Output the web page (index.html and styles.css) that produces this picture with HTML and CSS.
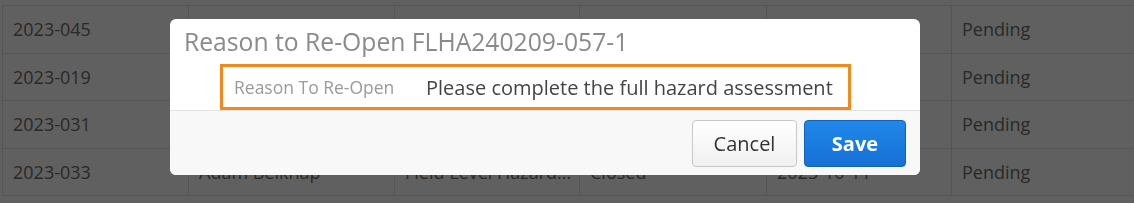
FILE: index.html
```html
<!DOCTYPE html>
<html lang="en">
<head>
  <meta charset="UTF-8">
  <title>FLHA Reviews</title>
  <link rel="stylesheet" href="styles.css">
</head>
<body>

  <div class="grid">
    <div class="row">
      <div class="cell">2023-045</div>
      <div class="cell"></div>
      <div class="cell"></div>
      <div class="cell"></div>
      <div class="cell"></div>
      <div class="cell">Pending</div>
    </div>
    <div class="row">
      <div class="cell">2023-019</div>
      <div class="cell"></div>
      <div class="cell"></div>
      <div class="cell"></div>
      <div class="cell"></div>
      <div class="cell">Pending</div>
    </div>
    <div class="row">
      <div class="cell">2023-031</div>
      <div class="cell"></div>
      <div class="cell"></div>
      <div class="cell"></div>
      <div class="cell"></div>
      <div class="cell">Pending</div>
    </div>
    <div class="row">
      <div class="cell">2023-033</div>
      <div class="cell">Adam Belknap</div>
      <div class="cell">Field Level Hazard...</div>
      <div class="cell">Closed</div>
      <div class="cell">2023-10-11</div>
      <div class="cell">Pending</div>
    </div>
  </div>

  <!-- modal backdrop -->
  <div class="overlay"></div>

  <div class="modal">
    <div class="modal-header">
      <div class="modal-title">Reason to Re-Open FLHA240209-057-1</div>
      <div class="field">
        <span class="field-label">Reason To Re-Open</span>
        <span class="field-value">Please complete the full hazard assessment</span>
      </div>
    </div>
    <div class="modal-footer">
      <button class="btn btn-cancel">Cancel</button>
      <button class="btn btn-save">Save</button>
    </div>
  </div>

</body>
</html>
```

FILE: styles.css
```css
body {
  margin: 0;
  padding: 0;
  font-family: "Open Sans", "Liberation Sans", sans-serif;
  background: #fff;
  overflow: hidden;
}

.grid {
  margin: 5px 0 0 2px;
  border-top: 1px solid #e2e2e2;
  border-left: 1px solid #e2e2e2;
}

.row {
  display: grid;
  grid-template-columns: 186px 206px 185px 187px 185px 200px;
  height: 46.5px;
  border-bottom: 1px solid #e2e2e2;
}

.cell {
  padding: 0 10px;
  border-right: 1px solid #e2e2e2;
  display: flex;
  align-items: center;
  font-size: 18px;
  color: #6e6e6e;
  white-space: nowrap;
  overflow: hidden;
}

.overlay {
  position: fixed;
  inset: 0;
  background: rgba(0, 0, 0, 0.625);
}

.modal {
  position: absolute;
  left: 170px;
  top: 19px;
  width: 750px;
  background: #fff;
  border-radius: 6px;
  overflow: hidden;
}

.modal-header {
  padding-top: 6px;
}

.modal-title {
  padding-left: 14px;
  font-size: 24.7px;
  line-height: 33px;
  color: #8a8a8a;
}

.field {
  margin: 6px 0 0 50px;
  width: 625px;
  height: 40px;
  border: 3px solid #ef8a1f;
  display: flex;
  align-items: center;
}

.field-label {
  width: 192px;
  padding-left: 11px;
  font-size: 17.5px;
  color: #9a9a9a;
}

.field-value {
  font-size: 20px;
  color: #444;
}

.modal-footer {
  border-top: 1px solid #e3e3e3;
  background: #f8f8f8;
  height: 64px;
  padding-right: 14px;
  display: flex;
  justify-content: flex-end;
  align-items: flex-start;
  gap: 7px;
}

.btn {
  margin-top: 9px;
  height: 47px;
  font-family: "Open Sans", "Liberation Sans", sans-serif;
  font-size: 20px;
  border-radius: 4px;
  cursor: pointer;
}

.btn-cancel {
  width: 105px;
  color: #333;
  background: linear-gradient(#ffffff, #f0f0f0);
  border: 1px solid #c8c8c8;
}

.btn-save {
  width: 102px;
  color: #fff;
  font-weight: bold;
  background: linear-gradient(#2088ea, #1670d4);
  border: 1px solid #1462b8;
}
```
